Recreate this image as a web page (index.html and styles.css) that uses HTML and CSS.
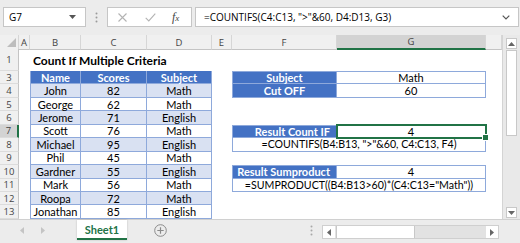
FILE: index.html
```html
<!DOCTYPE html>
<html>
<head>
<meta charset="utf-8">
<link rel="stylesheet" href="styles.css">
</head>
<body>
<div class="app">
  <div class="fbar">
    <div class="namebox"><span class="nb-text">G7</span>
      <svg class="nb-arrow" width="7" height="4" viewBox="0 0 7 4"><path d="M0 0H7L3.5 4Z" fill="#555"/></svg>
    </div>
    <div class="fdots">
      <svg width="3" height="11" viewBox="0 0 3 11"><circle cx="1.5" cy="1.5" r="1" fill="#9a9a9a"/><circle cx="1.5" cy="5.5" r="1" fill="#9a9a9a"/><circle cx="1.5" cy="9.5" r="1" fill="#9a9a9a"/></svg>
    </div>
    <div class="fxbox">
      <svg class="fx-x" width="9" height="9" viewBox="0 0 9 9"><path d="M0.5 0.5L8.5 8.5M8.5 0.5L0.5 8.5" stroke="#b3b3b3" stroke-width="1.1" fill="none"/></svg>
      <svg class="fx-check" width="11" height="9" viewBox="0 0 11 9"><path d="M0.7 4.8L3.8 7.9L10.3 0.6" stroke="#b3b3b3" stroke-width="1.1" fill="none"/></svg>
      <span class="fx-fx">f<span class="fx-sub">x</span></span>
    </div>
    <div class="finput">
      <span class="ftext">=COUNTIFS(C4:C13, "&gt;"&amp;60, D4:D13, G3)</span>
      <svg class="fchev" width="8" height="5" viewBox="0 0 8 5"><path d="M0.7 0.7L4 4L7.3 0.7" stroke="#555" stroke-width="1.2" fill="none"/></svg>
    </div>
  </div>

  <div class="main">
    <div class="sheet">
      <div class="colheads">
        <div class="ch corner"><svg class="corner-tri" width="9" height="9" viewBox="0 0 9 9"><path d="M9 0V9H0Z" fill="#bdbdbd"/></svg></div>
        <div class="ch">A</div>
        <div class="ch">B</div>
        <div class="ch">C</div>
        <div class="ch">D</div>
        <div class="ch">E</div>
        <div class="ch">F</div>
        <div class="ch sel">G</div>
        <div class="ch"></div>
      </div>
      <div class="body">
        <div class="rowheads">
          <div class="rh">1</div>
          <div class="rh">3</div>
          <div class="rh">4</div>
          <div class="rh">5</div>
          <div class="rh">6</div>
          <div class="rh sel">7</div>
          <div class="rh">8</div>
          <div class="rh">9</div>
          <div class="rh">10</div>
          <div class="rh">11</div>
          <div class="rh">12</div>
          <div class="rh">13</div>
        </div>
        <div class="cells">
          <div class="title">Count If Multiple Criteria</div>

          <div class="tbl">
            <div class="th">Name</div><div class="th">Scores</div><div class="th">Subject</div>
            <div class="td band">John</div><div class="td band">82</div><div class="td band">Math</div>
            <div class="td">George</div><div class="td">62</div><div class="td">Math</div>
            <div class="td band">Jerome</div><div class="td band">71</div><div class="td band">English</div>
            <div class="td">Scott</div><div class="td">76</div><div class="td">Math</div>
            <div class="td band">Michael</div><div class="td band">95</div><div class="td band">English</div>
            <div class="td">Phil</div><div class="td">45</div><div class="td">Math</div>
            <div class="td band">Gardner</div><div class="td band">55</div><div class="td band">English</div>
            <div class="td">Mark</div><div class="td">56</div><div class="td">Math</div>
            <div class="td band">Roopa</div><div class="td band">72</div><div class="td band">Math</div>
            <div class="td">Jonathan</div><div class="td">85</div><div class="td">English</div>
          </div>

          <div class="blk blk-crit">
            <div class="lab">Subject</div><div class="val">Math</div>
            <div class="lab">Cut OFF</div><div class="val">60</div>
          </div>

          <div class="blk blk-count">
            <div class="lab lab-r">Result Count IF</div><div class="val active">4<span class="handle"></span></div>
            <div class="val wide">=COUNTIFS(B4:B13, "&gt;"&amp;60, C4:C13, F4)</div>
          </div>

          <div class="blk blk-sum">
            <div class="lab lab-r">Result Sumproduct</div><div class="val">4</div>
            <div class="val wide">=SUMPRODUCT((B4:B13&gt;60)*(C4:C13="Math"))</div>
          </div>
        </div>
      </div>
    </div>
    <div class="vscroll">
      <div class="vbtn"><svg width="7" height="4" viewBox="0 0 7 4"><path d="M0 4H7L3.5 0Z" fill="#666"/></svg></div>
      <div class="vthumb"></div>
      <div class="vtrack"></div>
      <div class="vbtn"><svg width="7" height="4" viewBox="0 0 7 4"><path d="M0 0H7L3.5 4Z" fill="#666"/></svg></div>
    </div>
  </div>

  <div class="tabbar">
    <div class="tabnav">
      <svg width="4" height="7" viewBox="0 0 4 7"><path d="M4 0V7L0 3.5Z" fill="#c4c4c4"/></svg>
      <svg width="4" height="7" viewBox="0 0 4 7"><path d="M0 0V7L4 3.5Z" fill="#c4c4c4"/></svg>
    </div>
    <div class="tab">Sheet1</div>
    <div class="addsheet">
      <svg width="13" height="13" viewBox="0 0 13 13"><circle cx="6.5" cy="6.5" r="5.8" fill="none" stroke="#8a8a8a" stroke-width="1"/><path d="M6.5 3.3V9.7M3.3 6.5H9.7" stroke="#8a8a8a" stroke-width="1.2"/></svg>
    </div>
    <div class="tabspace"></div>
    <div class="hdots">
      <svg width="3" height="11" viewBox="0 0 3 11"><circle cx="1.5" cy="1.5" r="1" fill="#a8a8a8"/><circle cx="1.5" cy="5.5" r="1" fill="#a8a8a8"/><circle cx="1.5" cy="9.5" r="1" fill="#a8a8a8"/></svg>
    </div>
    <div class="hscroll">
      <div class="hbtn"><svg width="4" height="7" viewBox="0 0 4 7"><path d="M4 0V7L0 3.5Z" fill="#666"/></svg></div>
      <div class="hthumb"></div>
      <div class="htrack"></div>
      <div class="hbtn"><svg width="4" height="7" viewBox="0 0 4 7"><path d="M0 0V7L4 3.5Z" fill="#666"/></svg></div>
    </div>
  </div>
</div>
</body>
</html>
```

FILE: styles.css
```css
html, body {
  margin: 0;
  padding: 0;
  overflow: hidden;
}

.app {
  width: 520px;
  height: 243px;
  display: flex;
  flex-direction: column;
  background: #ececec;
  font-family: Lato, "Liberation Sans", sans-serif;
  color: #000;
}

/* formula bar */
.fbar {
  height: 35px;
  box-sizing: border-box;
  padding: 7px 1px 0 3px;
  display: flex;
  align-items: flex-start;
  font-family: "Open Sans", "Liberation Sans", sans-serif;
  font-size: 10px;
}

.namebox {
  width: 83px;
  height: 20px;
  box-sizing: border-box;
  background: #fff;
  border: 1px solid #c6c6c6;
  display: flex;
  align-items: center;
  justify-content: space-between;
  padding: 0 9px 0 5px;
}

.fdots {
  width: 21px;
  height: 20px;
  display: flex;
  align-items: center;
  justify-content: center;
}

.fxbox {
  width: 85px;
  height: 20px;
  box-sizing: border-box;
  background: #fff;
  border: 1px solid #c6c6c6;
  display: flex;
  align-items: center;
  padding-left: 10px;
}

.fx-check {
  margin-left: 18px;
}

.fx-fx {
  margin-left: 16px;
  font-family: "Liberation Serif", serif;
  font-style: italic;
  font-size: 12px;
  color: #444;
}

.fx-sub {
  font-size: 9px;
}

.finput {
  flex: 1;
  margin-left: 3px;
  height: 20px;
  box-sizing: border-box;
  background: #fff;
  border: 1px solid #c6c6c6;
  display: flex;
  align-items: center;
  justify-content: space-between;
  padding: 0 8px 0 8px;
  white-space: nowrap;
}

/* sheet */
.main {
  display: flex;
  height: 184px;
}

.sheet {
  width: 502px;
  display: flex;
  flex-direction: column;
  background: #fff;
}

.colheads {
  display: grid;
  grid-template-columns: 19px 11px 51px 66px 65px 20px 105px 149px 16px;
  height: 14px;
}

.ch, .rh {
  box-sizing: border-box;
  background: #f0f0f0;
  color: #444;
  font-family: "Open Sans", "Liberation Sans", sans-serif;
  font-size: 9.5px;
  display: flex;
  align-items: center;
  justify-content: center;
}

.ch {
  border-right: 1px solid #d6d6d6;
  border-bottom: 1px solid #c4c4c4;
}

.ch.sel {
  background: #d3d3d3;
  border-bottom: 2px solid #217346;
}

.corner {
  justify-content: flex-end;
  align-items: flex-end;
  padding: 0 2px 2px 0;
}

.body {
  display: flex;
  flex: 1;
}

.rowheads {
  width: 19px;
  display: grid;
  grid-template-rows: 22px repeat(11, 13.45px);
}

.rh {
  border-right: 1px solid #c4c4c4;
  border-bottom: 1px solid #dcdcdc;
}

.rh.sel {
  background: #d3d3d3;
  border-right: 2px solid #217346;
}

.cells {
  flex: 1;
  display: grid;
  grid-template-columns: 11px 51px 66px 65px 20px 105px 149px 16px;
  grid-template-rows: 22px repeat(11, 13.45px);
  font-size: 11px;
}

.title {
  grid-column: 2 / 6;
  grid-row: 1;
  align-self: center;
  padding-left: 3px;
  font-weight: bold;
  font-size: 12px;
  white-space: nowrap;
}

.tbl {
  grid-column: 2 / 5;
  grid-row: 2 / 13;
  display: grid;
  grid-template-columns: 51px 66px 65px;
  grid-template-rows: repeat(11, 13.45px);
}

.th, .td, .lab, .val {
  box-sizing: border-box;
  display: flex;
  align-items: center;
  justify-content: center;
  white-space: nowrap;
  border-right: 1px solid #8ea9db;
  border-bottom: 1px solid #8ea9db;
}

.tbl > div:nth-child(3n+1) {
  border-left: 1px solid #8ea9db;
}

.th {
  background: #4472c4;
  color: #fff;
  font-weight: bold;
}

.band {
  background: #d9e1f2;
}

.blk {
  grid-column: 6 / 8;
  display: grid;
  grid-template-columns: 105px 149px;
  grid-template-rows: repeat(2, 13.45px);
}

.blk-crit { grid-row: 2 / 4; }
.blk-count { grid-row: 6 / 8; }
.blk-sum { grid-row: 9 / 11; }

.blk > div:first-child {
  border-top: 1px solid #8ea9db;
}

.blk > .val:nth-child(2) {
  border-top: 1px solid #8ea9db;
}

.lab {
  background: #4472c4;
  color: #fff;
  font-weight: bold;
  border-left: 1px solid #8ea9db;
}

.lab-r {
  justify-content: flex-end;
  padding-right: 6px;
}

.val.wide {
  grid-column: 1 / 3;
  border-left: 1px solid #8ea9db;
  font-size: 10.6px;
}

.active {
  position: relative;
  outline: 2px solid #217346;
  outline-offset: -1px;
}

.handle {
  position: absolute;
  right: -4px;
  bottom: -4px;
  width: 5px;
  height: 5px;
  background: #217346;
  border: 1px solid #fff;
}

/* vertical scrollbar */
.vscroll {
  width: 18px;
  box-sizing: border-box;
  border-left: 1px solid #d4d4d4;
  background: #e9e9e9;
  display: flex;
  flex-direction: column;
  align-items: center;
  padding: 3px 0 1px;
}

.vbtn {
  width: 11px;
  height: 11px;
  display: flex;
  align-items: center;
  justify-content: center;
  background: #fff;
  border: 1px solid #c8c8c8;
  box-sizing: border-box;
}

.vthumb {
  width: 11px;
  height: 86px;
  box-sizing: border-box;
  margin-top: 1px;
  background: #fff;
  border: 1px solid #c8c8c8;
}

.vtrack {
  flex: 1;
}

/* tab bar */
.tabbar {
  height: 24px;
  box-sizing: border-box;
  border-top: 1px solid #d0d0d0;
  display: flex;
  align-items: stretch;
  padding-bottom: 3px;
}

.tabnav {
  width: 77px;
  display: flex;
  align-items: center;
  gap: 17px;
  padding-left: 20px;
  box-sizing: border-box;
}

.tab {
  width: 50px;
  background: #fff;
  color: #217346;
  font-weight: bold;
  font-size: 11px;
  display: flex;
  align-items: center;
  justify-content: center;
  border-bottom: 2px solid #217346;
  box-shadow: 0 0 2px rgba(0,0,0,0.2);
}

.addsheet {
  margin-left: 27px;
  display: flex;
  align-items: center;
}

.tabspace {
  flex: 1;
}

.hdots {
  display: flex;
  align-items: center;
  margin-right: 9px;
}

.hscroll {
  width: 177px;
  margin: 5px 21px 1px 0;
  display: flex;
  align-items: stretch;
  background: #e2e2e2;
  border: 1px solid #cfcfcf;
  box-sizing: border-box;
}

.hbtn {
  width: 12px;
  display: flex;
  align-items: center;
  justify-content: center;
  background: #fff;
}

.hthumb {
  width: 77px;
  margin-left: 1px;
  background: #fff;
  border-left: 1px solid #c8c8c8;
  border-right: 1px solid #c8c8c8;
}

.htrack {
  flex: 1;
}
```
